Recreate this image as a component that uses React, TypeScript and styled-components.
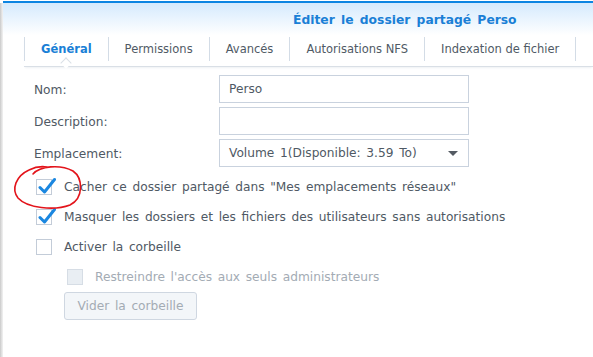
import * as React from "react";
import styled, { createGlobalStyle } from "styled-components";

const GlobalStyle = createGlobalStyle`
  html, body {
    margin: 0;
    padding: 0;
    background: #ffffff;
  }
  body {
    font-family: "DejaVu Sans", Verdana, sans-serif;
    font-size: 12.2px;
    word-spacing: 1.8px;
    color: #4f5964;
  }
`;

const Frame = styled.div`
  position: relative;
  display: flex;
  width: 593px;
  height: 357px;
  overflow: hidden;
  background: #ffffff;
`;

const Shadow = styled.div`
  width: 3px;
  margin-top: 3px;
  background: linear-gradient(to right, #c9c9c9, #e4e4e4 60%, #f2f2f2);
`;

const Main = styled.div`
  flex: 1;
  display: flex;
  flex-direction: column;
  padding-top: 1px;
`;

const TopBar = styled.div`
  height: 2px;
  background: #0c85e2;
`;

const Header = styled.header`
  display: flex;
  align-items: center;
  height: 34px;
  padding-left: 290px;
  background: linear-gradient(to bottom, #d5eafd, #ffffff 95%);
`;

const Title = styled.h1`
  margin: 0;
  font-size: 12.3px;
  font-weight: bold;
  word-spacing: 2px;
  color: #1a7fd6;
`;

const TabBar = styled.nav`
  display: flex;
  align-items: flex-start;
  height: 29px;
  margin-left: 21px;
  border-bottom: 1px solid #d9dfe6;
  box-shadow: 0 2px 2px -1px #eef1f4;
`;

const Tab = styled.div<{ $active?: boolean; $last?: boolean }>`
  position: relative;
  display: flex;
  align-items: center;
  height: 24px;
  padding: 0 16px;
  font-size: 11.5px;
  word-spacing: 0;
  border-left: 1px solid #d3dce6;
  border-right: ${(p) => (p.$last ? "1px solid #d3dce6" : "none")};
  color: ${(p) => (p.$active ? "#1a7fd6" : "#505a65")};
  font-weight: ${(p) => (p.$active ? "bold" : "normal")};
  white-space: nowrap;

  &::after {
    content: "";
    display: ${(p) => (p.$active ? "block" : "none")};
    position: absolute;
    left: 50%;
    bottom: -6px;
    width: 7px;
    height: 7px;
    margin-left: -4px;
    background: #ffffff;
    border-left: 1px solid #d9dfe6;
    border-top: 1px solid #d9dfe6;
    transform: rotate(45deg);
  }
`;

const Body = styled.section`
  display: flex;
  flex-direction: column;
  padding: 8px 0 0 31px;
`;

const FormGrid = styled.div`
  display: grid;
  grid-template-columns: 185px 250px;
  grid-auto-rows: 28px;
  row-gap: 4px;
  align-items: center;
`;

const Label = styled.label`
  white-space: nowrap;
  padding-top: 2px;
`;

const Field = styled.div`
  box-sizing: border-box;
  display: flex;
  align-items: center;
  justify-content: space-between;
  height: 28px;
  padding: 0 9px;
  border: 1px solid #c9d2de;
  color: #4f5964;
  background: #ffffff;
  white-space: nowrap;
`;

const Caret = styled.span`
  width: 0;
  height: 0;
  border-left: 5px solid transparent;
  border-right: 5px solid transparent;
  border-top: 5px solid #545b63;
  margin-right: 1px;
`;

const Options = styled.div`
  display: flex;
  flex-direction: column;
  margin-top: 5px;
`;

const CheckRow = styled.div<{ $indent?: boolean; $disabled?: boolean }>`
  display: flex;
  align-items: center;
  gap: 12px;
  height: 30px;
  padding-left: ${(p) => (p.$indent ? "33px" : "2px")};
  color: ${(p) => (p.$disabled ? "#a3abb4" : "#4f5964")};
  white-space: nowrap;
`;

const Box = styled.span<{ $disabled?: boolean }>`
  position: relative;
  box-sizing: border-box;
  width: 16px;
  height: 16px;
  flex: none;
  border: 1px solid ${(p) => (p.$disabled ? "#d6dde5" : "#c3ccd8")};
  background: ${(p) => (p.$disabled ? "#e9eef3" : "#ffffff")};

  svg {
    position: absolute;
    left: 1px;
    top: -3px;
  }
`;

const Button = styled.div`
  box-sizing: border-box;
  display: flex;
  align-items: center;
  justify-content: center;
  width: 133px;
  height: 28px;
  margin: 0 0 0 30px;
  border: 1px solid #cfd7e1;
  border-radius: 3px;
  background: #f3f6f9;
  color: #a3abb4;
`;

const Annotation = styled.svg`
  position: absolute;
  left: 0;
  top: 0;
  pointer-events: none;
`;

function Check() {
  return (
    <svg width="18" height="17" viewBox="0 0 18 17">
      <path
        d="M2 10.5 L6.5 15 L16.5 2.5"
        fill="none"
        stroke="#1b87e0"
        strokeWidth="3"
        strokeLinecap="round"
        strokeLinejoin="round"
      />
    </svg>
  );
}

interface OptionProps {
  label: string;
  checked?: boolean;
  indent?: boolean;
  disabled?: boolean;
}

function Option(props: OptionProps) {
  return (
    <CheckRow $indent={props.indent} $disabled={props.disabled}>
      <Box $disabled={props.disabled}>{props.checked ? <Check /> : null}</Box>
      {props.label}
    </CheckRow>
  );
}

const tabs = [
  "Général",
  "Permissions",
  "Avancés",
  "Autorisations NFS",
  "Indexation de fichier",
];

export default function App() {
  return (
    <Frame>
      <GlobalStyle />
      <Shadow />
      <Main>
        <TopBar />
        <Header>
          <Title>Éditer le dossier partagé Perso</Title>
        </Header>
        <TabBar>
          {tabs.map((t, i) => (
            <Tab key={t} $active={i === 0} $last={i === tabs.length - 1}>
              {t}
            </Tab>
          ))}
        </TabBar>
        <Body>
          <FormGrid>
            <Label>Nom:</Label>
            <Field>Perso</Field>
            <Label>Description:</Label>
            <Field />
            <Label>Emplacement:</Label>
            <Field>
              Volume 1(Disponible: 3.59 To)
              <Caret />
            </Field>
          </FormGrid>
          <Options>
            <Option checked label={'Cacher ce dossier partagé dans "Mes emplacements réseaux"'} />
            <Option checked label="Masquer les dossiers et les fichiers des utilisateurs sans autorisations" />
            <Option label="Activer la corbeille" />
            <Option indent disabled label="Restreindre l'accès aux seuls administrateurs" />
          </Options>
          <Button>Vider la corbeille</Button>
        </Body>
      </Main>
      <Annotation width="593" height="357" viewBox="0 0 593 357">
        <path
          d="M33 174 C40 166, 60 164, 73 171 C83 178, 84 198, 70 205 C54 211, 27 208, 18 198 C11 189, 16 176, 29 170 C35 167, 41 166, 47 167"
          fill="none"
          stroke="#e3141b"
          strokeWidth="1.6"
          strokeLinecap="round"
        />
      </Annotation>
    </Frame>
  );
}
